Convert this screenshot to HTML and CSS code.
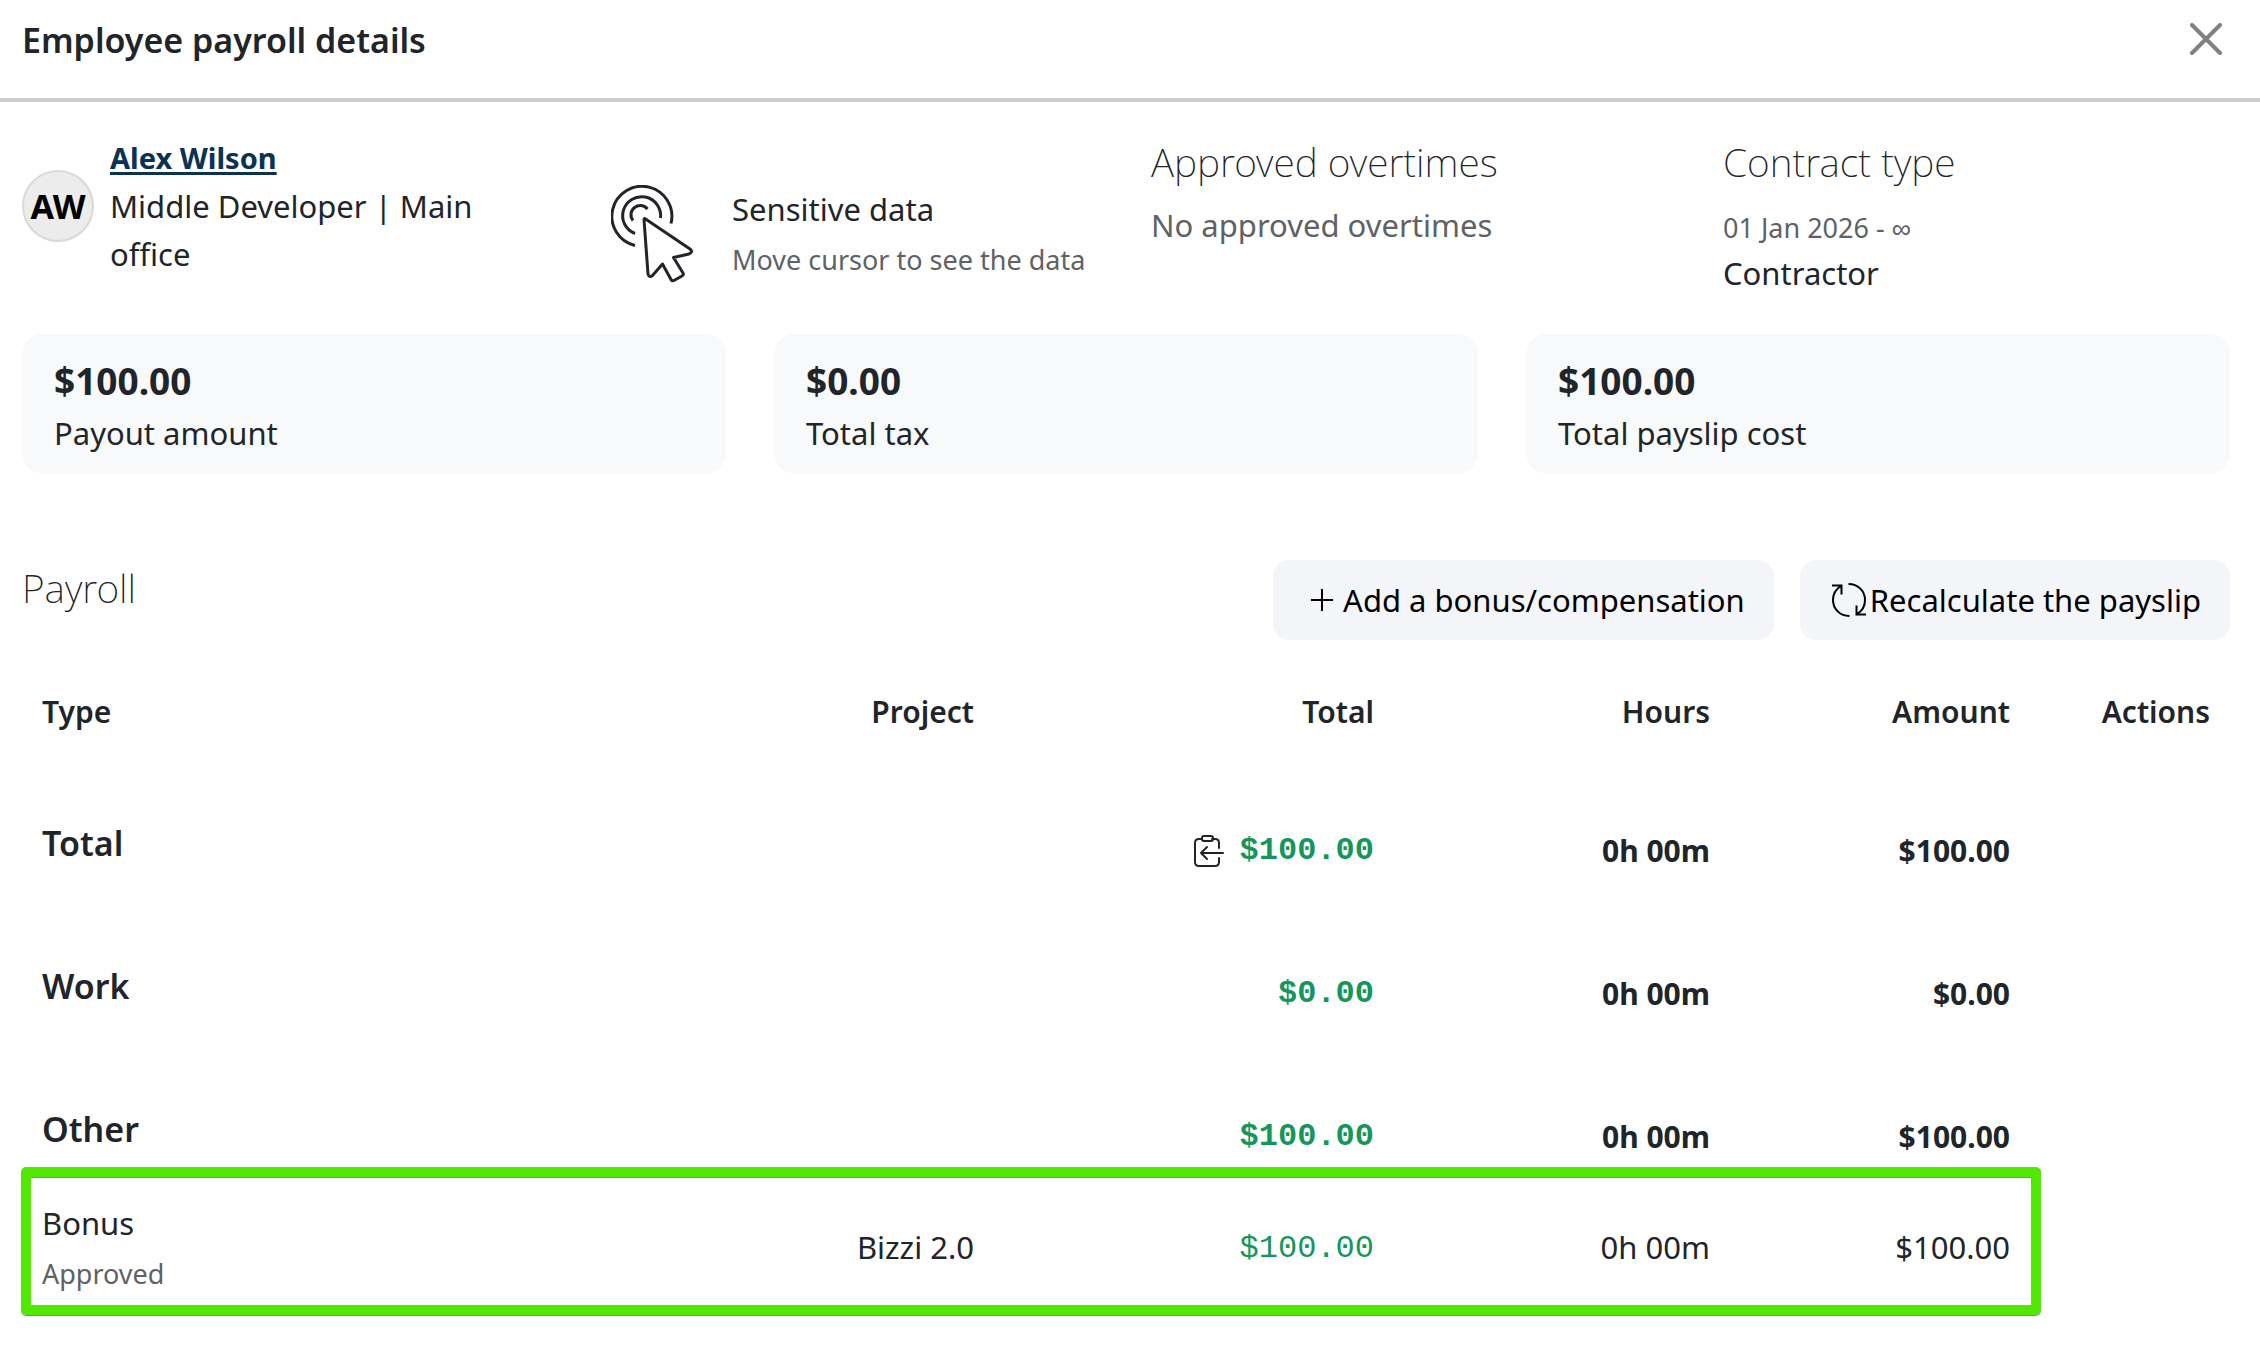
FILE: index.html
```html
<!DOCTYPE html>
<html lang="en">

<head>
    <meta charset="UTF-8">
    <meta name="viewport" content="width=device-width, initial-scale=1.0">
    <title>Employee payroll details</title>
    <link rel="stylesheet" href="styles.css">
</head>

<body>
    <header class="modal-header">
        <h1>Employee payroll details</h1>
        <button type="button" class="close" aria-label="Close">
            <svg width="32" height="32" viewBox="0 0 32 32" fill="none" stroke="currentColor" stroke-width="4" stroke-linecap="round">
                <path d="M2 2 30 30M30 2 2 30" />
            </svg>
        </button>
    </header>

    <main class="modal-body">
        <section class="summary">
            <div class="employee">
                <div class="avatar">AW</div>
                <div class="employee-info">
                    <div class="name"><a href="#">Alex Wilson</a></div>
                    <div>Middle Developer | Main office</div>
                </div>
            </div>
            <div class="sensitive">
                <svg width="84" height="98" viewBox="0 0 84 98" fill="none" stroke="currentColor" stroke-width="3" stroke-linejoin="round">
                    <path d="M24 60.500A30 30 0 1 1 60 38.500" />
                    <path d="M24 48.500A19 19 0 1 1 49.500 33" />
                    <path d="M22 35.500A9 9 0 0 1 36.500 24" />
                    <path d="M33 34.500Q33 33 34.500 34L79 64Q82.500 67 78 69L62.500 72.500 72 88Q73 90 71 91L63 95.500Q61 96.500 60 94.500L51.500 79 41.500 90.500Q38 93 37 89Z" />
                </svg>
                <div>
                    <div>Sensitive data</div>
                    <div class="muted small">Move cursor to see the data</div>
                </div>
            </div>
            <div class="info">
                <h2>Approved overtimes</h2>
                <div class="muted">No approved overtimes</div>
            </div>
            <div class="info">
                <h2>Contract type</h2>
                <div class="muted small">01 Jan 2026 - ∞</div>
                <div>Contractor</div>
            </div>
        </section>

        <section class="cards">
            <div class="card">
                <div class="card-value">$100.00</div>
                <div>Payout amount</div>
            </div>
            <div class="card">
                <div class="card-value">$0.00</div>
                <div>Total tax</div>
            </div>
            <div class="card">
                <div class="card-value">$100.00</div>
                <div>Total payslip cost</div>
            </div>
        </section>

        <section class="toolbar">
            <h2>Payroll</h2>
            <div class="buttons">
                <button type="button" class="btn btn-add">
                    <svg width="22" height="22" viewBox="0 0 22 22" fill="none" stroke="currentColor" stroke-width="2">
                        <path d="M11 0V22M0 11H22" />
                    </svg>
                    Add a bonus/compensation
                </button>
                <button type="button" class="btn btn-recalc">
                    <svg width="34" height="34" viewBox="0 0 34 34" fill="none" stroke="currentColor" stroke-width="2">
                        <path d="M17.500 33C8 33 1 26 1 17 1 11 4 6 9 3M0 2.500H9.500V11.500" />
                        <path d="M16.500 1C26 1 33 8 33 17 33 23 30 28 25 31M34 31.500H24.500V22.500" />
                    </svg>
                    Recalculate the payslip
                </button>
            </div>
        </section>

        <table class="payroll">
            <colgroup>
                <col class="col-type">
                <col class="col-project">
                <col class="col-total">
                <col class="col-hours">
                <col class="col-amount">
                <col class="col-actions">
            </colgroup>
            <thead>
                <tr>
                    <th>Type</th>
                    <th>Project</th>
                    <th>Total</th>
                    <th>Hours</th>
                    <th>Amount</th>
                    <th>Actions</th>
                </tr>
            </thead>
            <tbody>
                <tr class="group">
                    <td><h3>Total</h3></td>
                    <td></td>
                    <td class="money">
                        <div class="with-icon">
                            <svg width="30" height="32" viewBox="0 0 30 32" fill="none" stroke="currentColor" stroke-width="2" stroke-linecap="round" stroke-linejoin="round">
                                <path d="M8 4H5Q1 4 1 8V27Q1 31 5 31H21Q25 31 25 27V23M18 4H21Q25 4 25 8V13" />
                                <rect x="8" y="1" width="11" height="5" rx="2" />
                                <path d="M29 18H7M13 12 7 18 13 24" />
                            </svg>
                            $100.00
                        </div>
                    </td>
                    <td>0h 00m</td>
                    <td>$100.00</td>
                    <td></td>
                </tr>
                <tr class="group">
                    <td><h3>Work</h3></td>
                    <td></td>
                    <td class="money">$0.00</td>
                    <td>0h 00m</td>
                    <td>$0.00</td>
                    <td></td>
                </tr>
                <tr class="group">
                    <td><h3>Other</h3></td>
                    <td></td>
                    <td class="money">$100.00</td>
                    <td>0h 00m</td>
                    <td>$100.00</td>
                    <td></td>
                </tr>
                <tr class="item highlighted">
                    <td>
                        <div>Bonus</div>
                        <div class="muted small">Approved</div>
                    </td>
                    <td>Bizzi 2.0</td>
                    <td><span class="money">$100.00</span></td>
                    <td>0h 00m</td>
                    <td>$100.00</td>
                    <td></td>
                </tr>
            </tbody>
        </table>
    </main>
</body>

</html>
```
FILE: styles.css
```css
* {
    box-sizing: border-box;
}

body {
    margin: 0;
    font-family: "Noto Sans", sans-serif;
    font-size: 31px;
    line-height: 48px;
    color: #212529;
    background: #fff;
}

h1, h2, h3 {
    margin: 0;
}

svg {
    display: block;
    flex-shrink: 0;
}

.modal-header {
    display: flex;
    justify-content: space-between;
    align-items: flex-start;
    padding: 16px 38px 34px 22px;
    border-bottom: 4px solid #ccc;
}

.modal-header h1 {
    font-size: 34px;
    font-weight: 600;
}

.close {
    margin-top: 7px;
    padding: 0;
    border: none;
    background: none;
    color: #808080;
    cursor: pointer;
}

.modal-body {
    padding: 32px 30px 30px 22px;
}

.summary {
    display: grid;
    grid-template-columns: 589fr 540fr 572fr 507fr;
    align-items: start;
}

.employee {
    display: flex;
    align-items: center;
    gap: 16px;
}

.employee-info {
    max-width: 400px;
}

.name {
    font-size: 29px;
    font-weight: 700;
}

.name a {
    color: #0b3153;
    text-underline-offset: 3px;
    text-decoration-thickness: 3px;
}

.avatar {
    display: flex;
    align-items: center;
    justify-content: center;
    flex-shrink: 0;
    width: 72px;
    height: 72px;
    border: 2px solid #d9d9d9;
    border-radius: 50%;
    background: #ececec;
    color: #000;
    font-size: 34px;
    font-weight: 700;
}

.sensitive {
    display: flex;
    gap: 37px;
    padding-top: 51px;
}

.info {
    padding-top: 4px;
}

h2 {
    font-size: 39px;
    font-weight: 200;
}

.info h2 {
    margin-bottom: 15px;
}

.muted {
    color: #5f6265;
}

.small {
    padding-top: 6px;
    font-size: 27px;
    line-height: 42px;
}

.cards {
    display: grid;
    grid-template-columns: repeat(3, 1fr);
    gap: 48px;
    margin-top: 37px;
}

.card {
    padding: 23px 32px 16px;
    border-radius: 20px;
    background: #f8f9fb;
}

.card-value {
    margin-bottom: 4px;
    font-size: 37px;
    font-weight: 700;
}

.toolbar {
    display: flex;
    justify-content: space-between;
    align-items: flex-start;
    margin-top: 87px;
}

.toolbar h2 {
    padding-top: 4px;
}

.buttons {
    display: flex;
    gap: 26px;
}

.btn {
    display: flex;
    align-items: center;
    height: 80px;
    padding: 0 29px;
    border: none;
    border-radius: 16px;
    background: #f4f5f8;
    color: #000;
    font: inherit;
    cursor: pointer;
}

.btn-add {
    gap: 10px;
    padding-left: 38px;
}

.btn-recalc {
    gap: 4px;
    padding-left: 32px;
}

.payroll {
    width: 100%;
    margin-top: 33px;
    border-collapse: collapse;
    table-layout: fixed;
}

.col-project,
.col-amount {
    width: 300px;
}

.col-total {
    width: 400px;
}

.col-hours {
    width: 336px;
}

.col-actions {
    width: 200px;
}

.payroll th,
.payroll td {
    padding: 15px 20px;
    text-align: right;
    vertical-align: middle;
}

.payroll th:first-child,
.payroll td:first-child {
    text-align: left;
}

.payroll th {
    font-size: 30px;
    font-weight: 600;
}

.payroll .group td {
    padding: 76px 20px 19px;
    font-size: 30px;
    font-weight: 700;
}

.payroll h3 {
    margin-bottom: 16px;
    font-size: 34px;
    font-weight: 600;
    line-height: 32px;
}

.payroll .item td {
    padding: 19px 20px;
}

.payroll .money,
.payroll .group .money {
    font-family: "Liberation Mono", monospace;
    font-size: 32px;
    color: #16965a;
}

.with-icon {
    display: flex;
    align-items: center;
    justify-content: flex-end;
    gap: 16px;
}

.with-icon svg {
    color: #212529;
}

.highlighted {
    position: relative;
}

/* frame around the row, the actions column stays outside */
.highlighted td:first-child::after {
    content: "";
    position: absolute;
    top: -13px;
    bottom: -1px;
    left: -1px;
    right: 189px;
    border: 10px solid #52e804;
    border-radius: 5px;
    box-shadow: 0 1px 0 #888, inset 0 1px 0 #888;
    pointer-events: none;
}
```
